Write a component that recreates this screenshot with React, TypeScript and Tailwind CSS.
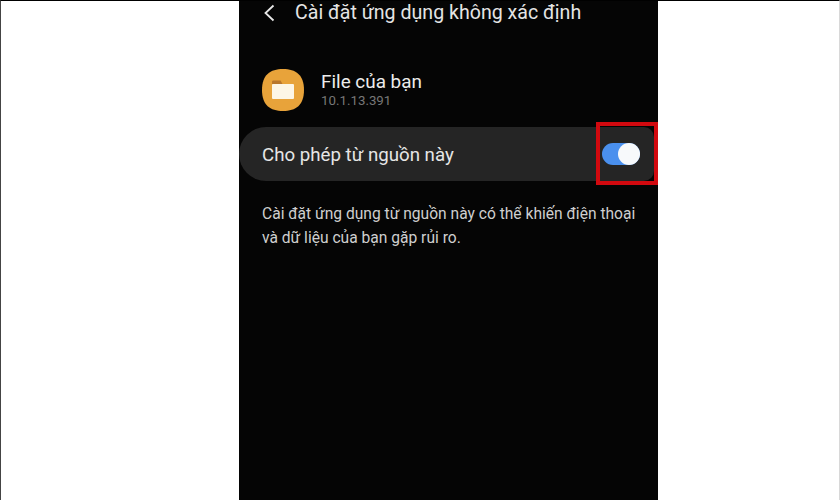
import React from 'react';

const font = { fontFamily: 'Roboto, "Noto Sans", sans-serif' };

const FolderIcon = () => (
  <svg width="42" height="42" viewBox="0 0 42 42">
    <path d="M21 0C34 0 42 6 42 21C42 36 34 42 21 42C8 42 0 36 0 21C0 6 8 0 21 0Z" fill="#e8a33a" />
    <path d="M10 15V13C10 12 10.500 11.500 11.500 11.500H18.500L20.500 15Z" fill="#b9772c" />
    <rect x="10" y="15" width="22" height="15" rx="1" fill="#fdf6e6" />
  </svg>
);

const Toggle = () => (
  <div className="relative w-[38px] h-[22px] rounded-full bg-[#4a90ee]">
    <div className="absolute right-0 top-0 w-[22px] h-[22px] rounded-full bg-[#f7f9fb]" />
  </div>
);

export default function App() {
  return (
    <div className="w-[840px] h-[500px] bg-white border-l border-t border-r border-l-[#444444] border-t-black border-r-[#d8d8d8] pl-[238px] overflow-hidden" style={font}>
      <div className="relative w-[419px] h-full bg-[#050505] flex flex-col">
        {/* Header */}
        <div className="flex items-center h-[24px] pl-[24px] gap-[20px]">
          <svg width="12" height="18" viewBox="0 0 12 18" fill="none" stroke="#e8e8e8" strokeWidth="1.800">
            <path d="M10.500 1.500L2.500 9L10.500 16.500" />
          </svg>
          <h1 className="text-[19.600px] leading-[24px] text-[#e4e4e4] whitespace-nowrap">Cài đặt ứng dụng không xác định</h1>
        </div>

        {/* App info */}
        <div className="flex items-center gap-[17px] pl-[23px] mt-[44px]">
          <FolderIcon />
          <div className="flex flex-col">
            <span className="text-[18.900px] leading-[22px] text-[#ececec]">File của bạn</span>
            <span className="text-[13.300px] leading-[16px] text-[#777777]">10.1.13.391</span>
          </div>
        </div>

        {/* Switch row */}
        <div className="flex items-center justify-between h-[54px] mt-[16px] mr-[4px] pl-[23px] pr-[14px] bg-[#252525] rounded-l-[27px] rounded-r-[10px]">
          <span className="text-[18.700px] text-[#e6e6e6] pt-[2px]">Cho phép từ nguồn này</span>
          <Toggle />
        </div>

        {/* Warning */}
        <p className="mt-[21px] mx-[23px] text-[15.600px] leading-[24px] text-[#cfcfcf] whitespace-nowrap">
          Cài đặt ứng dụng từ nguồn này có thể khiến điện thoại
          <br />
          và dữ liệu của bạn gặp rủi ro.
        </p>

        {/* Red highlight */}
        <div className="absolute left-[357px] top-[121px] w-[62px] h-[63px] border-[4px] border-[#d2090f]" />
      </div>
    </div>
  );
}
